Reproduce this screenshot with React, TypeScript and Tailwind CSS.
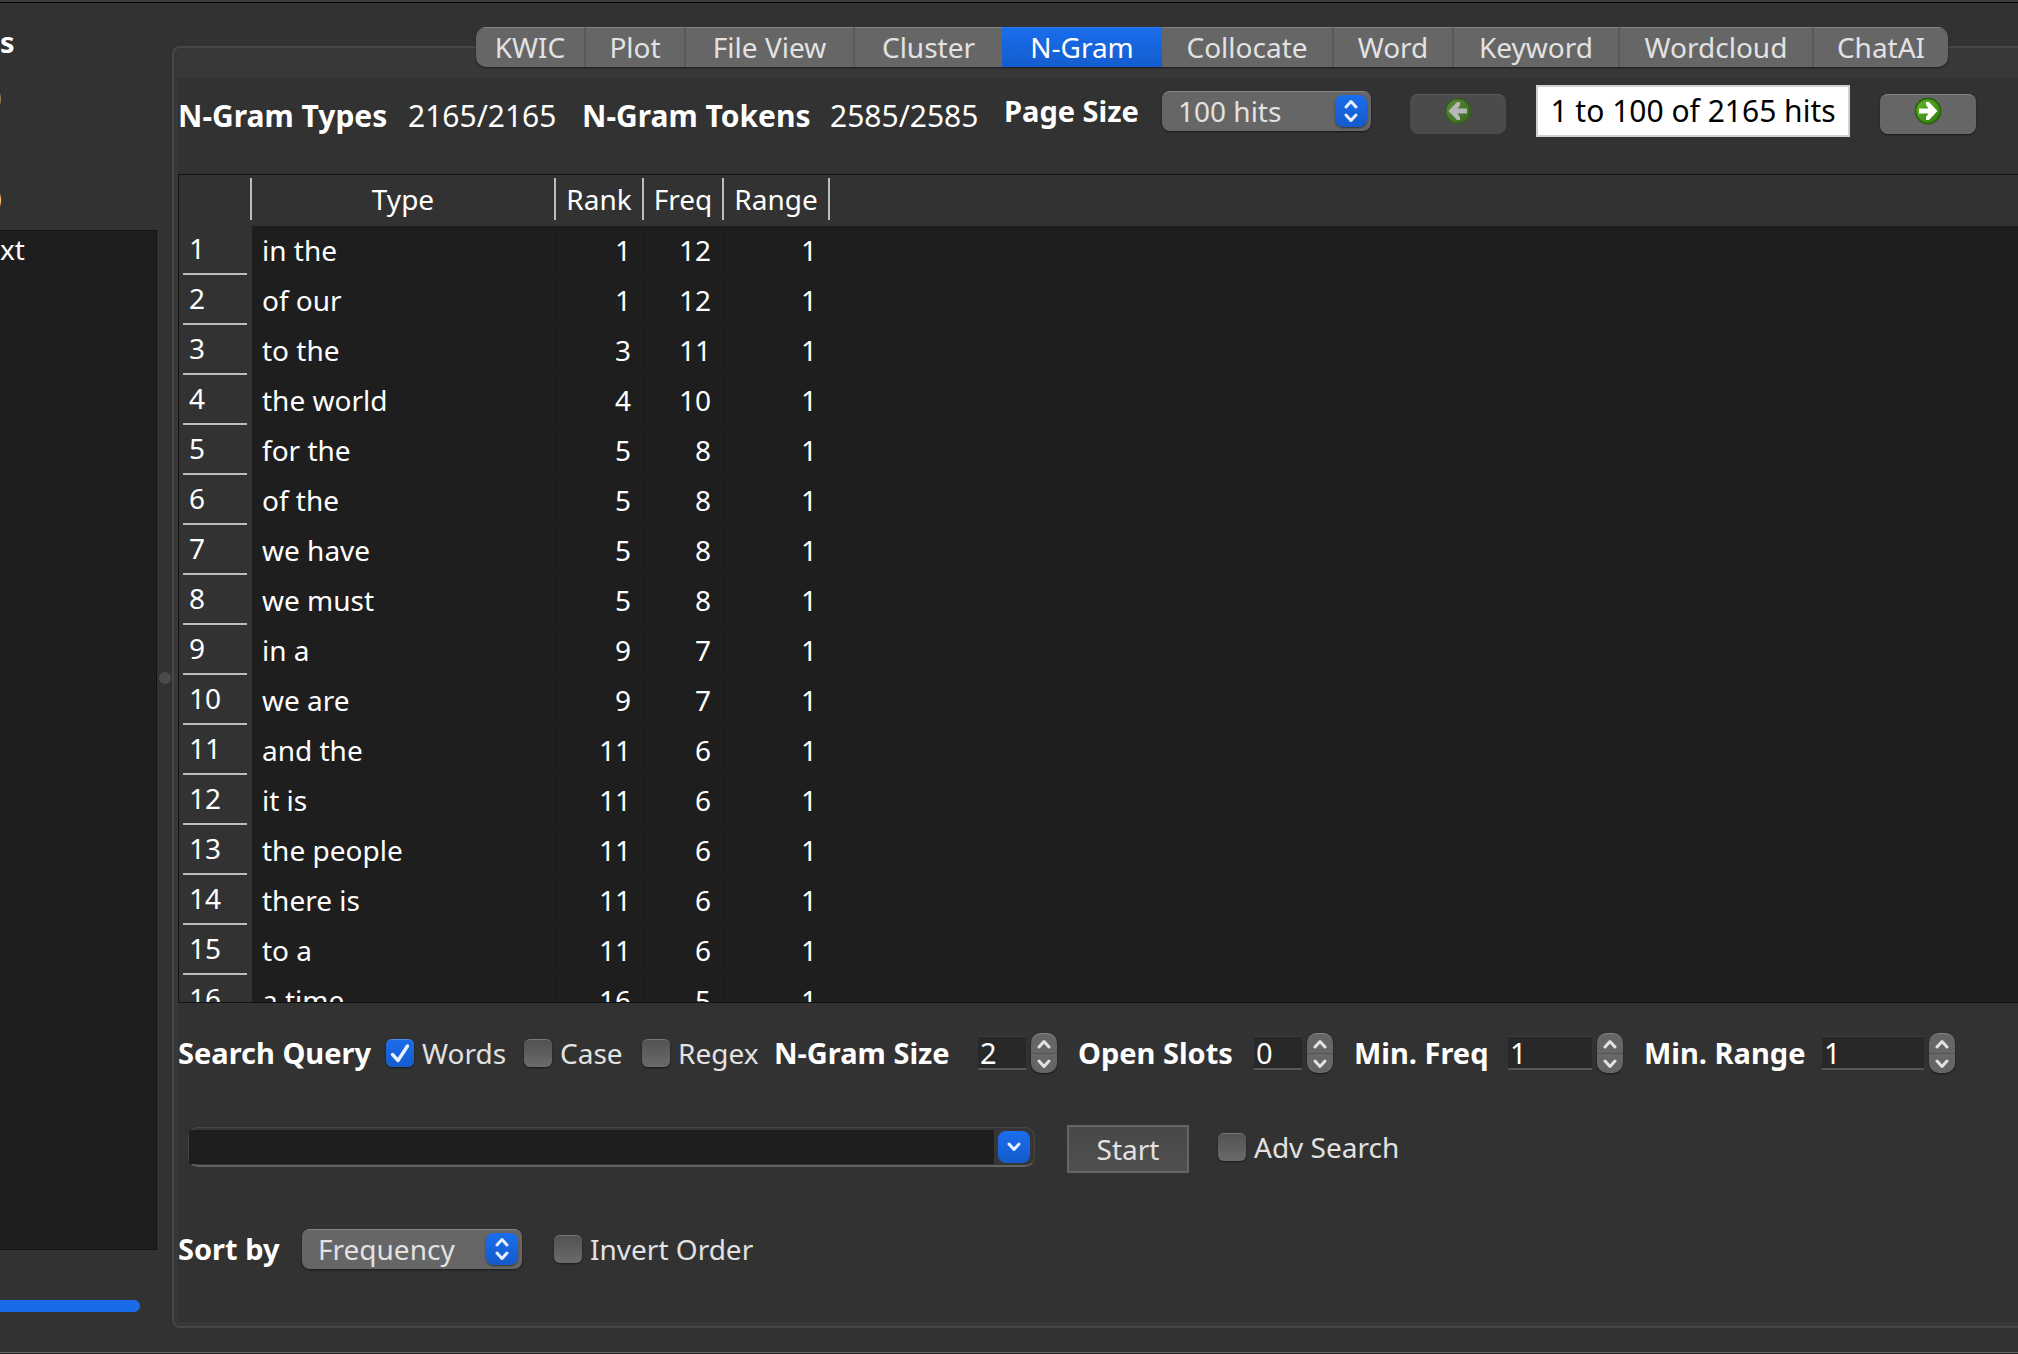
import type { ReactNode } from "react";

const TABS = [
  { name: "KWIC", width: "w-[110px]" },
  { name: "Plot", width: "w-[100px]" },
  { name: "File View", width: "w-[169px]" },
  { name: "Cluster", width: "w-[147px]" },
  { name: "N-Gram", width: "w-[160px]" },
  { name: "Collocate", width: "w-[172px]" },
  { name: "Word", width: "w-[120px]" },
  { name: "Keyword", width: "w-[166px]" },
  { name: "Wordcloud", width: "w-[194px]" },
  { name: "ChatAI", width: "w-[134px]" },
];

const ROWS: [string, number, number, number][] = [
  ["in the", 1, 12, 1],
  ["of our", 1, 12, 1],
  ["to the", 3, 11, 1],
  ["the world", 4, 10, 1],
  ["for the", 5, 8, 1],
  ["of the", 5, 8, 1],
  ["we have", 5, 8, 1],
  ["we must", 5, 8, 1],
  ["in a", 9, 7, 1],
  ["we are", 9, 7, 1],
  ["and the", 11, 6, 1],
  ["it is", 11, 6, 1],
  ["the people", 11, 6, 1],
  ["there is", 11, 6, 1],
  ["to a", 11, 6, 1],
  ["a time", 16, 5, 1],
];

function Popup({ id, value, width }: { id: string; value: string; width: string }) {
  return (
    <div className={`relative h-10 ${width}`}>
      <select
        id={id}
        defaultValue={value}
        className="h-10 w-full appearance-none rounded-lg border-t border-[#858585] bg-[#666666] pb-0.5 pl-4 text-[28px] leading-9 text-[#e2e2e2] shadow-[0_1px_2px_rgba(0,0,0,0.5)]"
      >
        <option>{value}</option>
      </select>
      <span className="pointer-events-none absolute top-1 right-1 flex h-8 w-8 items-center justify-center rounded-lg bg-linear-to-b from-[#1b6eee] to-[#145acb] shadow-[0_1px_2px_rgba(0,0,0,0.5)]">
        <svg width="14" height="24" viewBox="0 0 14 24" fill="none" stroke="#e8f0fd" strokeWidth="3" strokeLinecap="round" strokeLinejoin="round">
          <path d="M2 8 L7 2.5 L12 8" />
          <path d="M2 16 L7 21.5 L12 16" />
        </svg>
      </span>
    </div>
  );
}

function Check({ label, checked }: { label: string; checked?: boolean }) {
  return (
    <label className="flex items-center gap-2 text-[28px] leading-9 whitespace-nowrap text-[#e2e2e2]">
      <span className="relative h-7 w-7 shrink-0">
        <input
          type="checkbox"
          defaultChecked={checked}
          className="block h-7 w-7 appearance-none rounded-md border-t border-[#7a7a7a] bg-linear-to-b from-[#525252] to-[#6b6b6b] shadow-[0_1px_2px_rgba(0,0,0,0.5)] checked:border-[#4a8df2] checked:from-[#1b6cea] checked:to-[#155ccd]"
        />
        {checked && (
          <svg className="pointer-events-none absolute inset-0" width="28" height="28" viewBox="0 0 28 28" fill="none" stroke="#e8f0fd" strokeWidth="3.4" strokeLinecap="round" strokeLinejoin="round">
            <path d="M6.5 15.5 L12 21.5 L21.5 7" />
          </svg>
        )}
      </span>
      {label}
    </label>
  );
}

function Spin({ id, value, width }: { id: string; value: string; width: string }) {
  return (
    <div className="flex items-center gap-[5px]">
      <input
        id={id}
        type="text"
        defaultValue={value}
        className={`h-[34px] border-t border-b-2 border-t-[#3c3c3c] border-b-[#565656] bg-[#282828] pl-0.5 text-[29px] leading-8 text-white ${width}`}
      />
      <div className="flex h-10 w-[26px] flex-col overflow-hidden rounded-[10px] border-t border-[#858585] bg-[#666666] shadow-[0_1px_2px_rgba(0,0,0,0.5)]">
        <button type="button" aria-label={`Increase ${id}`} className="flex flex-1 items-center justify-center border-b border-[#545454]">
          <svg width="14" height="10" viewBox="0 0 14 10" fill="none" stroke="#e2e2e2" strokeWidth="3" strokeLinecap="round" strokeLinejoin="round">
            <path d="M2 8 L7 2.5 L12 8" />
          </svg>
        </button>
        <button type="button" aria-label={`Decrease ${id}`} className="flex flex-1 items-center justify-center">
          <svg width="14" height="10" viewBox="0 0 14 10" fill="none" stroke="#e2e2e2" strokeWidth="3" strokeLinecap="round" strokeLinejoin="round">
            <path d="M2 2 L7 7.5 L12 2" />
          </svg>
        </button>
      </div>
    </div>
  );
}

function PageButton({ back }: { back?: boolean }) {
  return (
    <button
      type="button"
      disabled={back}
      aria-label={back ? "Previous page" : "Next page"}
      className={
        back
          ? "flex h-10 w-24 justify-center rounded-lg border-t border-[#585858] bg-[#4b4b4b] pt-0.5"
          : "flex h-10 w-24 justify-center rounded-lg border-t border-[#858585] bg-[#666666] pt-0.5 shadow-[0_1px_2px_rgba(0,0,0,0.5)]"
      }
    >
      <svg width="28" height="28" viewBox="0 0 28 28" opacity={back ? 0.6 : 1}>
        <defs>
          <linearGradient id={back ? "orbBack" : "orbNext"} x1="0" y1="0" x2="1" y2="1">
            <stop offset="0" stopColor="#6fb52c" />
            <stop offset="0.5" stopColor="#479a17" />
            <stop offset="1" stopColor="#2f7a0c" />
          </linearGradient>
        </defs>
        <circle cx="14" cy="14" r="12.5" fill={back ? "url(#orbBack)" : "url(#orbNext)"} stroke="#2c6410" strokeWidth="2" />
        <path
          d={back ? "M4.5 14 L13 5 H16 V8 L13.5 11.5 H23 V16.5 H13.5 L16 20 V23 H13 Z" : "M23.5 14 L15 5 H12 V8 L14.5 11.5 H5 V16.5 H14.5 L12 20 V23 H15 Z"}
          fill="#fff"
        />
      </svg>
    </button>
  );
}

function HeadCell({ children }: { children?: ReactNode }) {
  return (
    <th scope="col" className="p-0 font-normal">
      <div className="mb-1 flex h-[42px] items-center justify-center border-r-2 border-[#bdbdbd]">{children}</div>
    </th>
  );
}

function Sidebar() {
  return (
    <aside className="flex w-[158px] shrink-0 flex-col text-[28px] leading-9 text-white">
      <div className="flex h-[227px] flex-col pt-[21px]">
        <h2 className="h-9 text-[29px] font-bold">s</h2>
        <div className="mt-5 flex h-9 w-0.5 justify-end overflow-hidden text-[#9a9a9a]">0</div>
        <div className="mt-[65px] flex h-9 w-0.5 justify-end overflow-hidden">0</div>
      </div>
      <div className="mr-px mb-[50px] flex-1 border border-l-0 border-[#121212] bg-[#1e1e1e]">
        <div className="h-9">xt</div>
      </div>
      <div className="mb-10 h-3 w-[140px] rounded-r-full bg-[#196be8]" />
    </aside>
  );
}

export default function App() {
  return (
    <div className="flex h-screen flex-col overflow-hidden bg-[#323232] font-['Noto_Sans',sans-serif] text-white">
      <div className="h-[3px] shrink-0 border-b border-black bg-[#3c3c3c]" />
      <div className="flex min-h-0 flex-1">
        <Sidebar />
        <div className="flex w-3.5 shrink-0 items-center justify-center">
          <div className="h-3 w-3 rounded-full bg-[#4b4b4b]" />
        </div>

        <main className="flex min-w-0 flex-1 flex-col pt-6 pb-6">
          <nav className="relative z-10 ml-[304px] flex h-10 w-max overflow-hidden rounded-[10px] bg-[#666666] shadow-[0_1px_2px_rgba(0,0,0,0.5)]">
            {TABS.map((tab, i) => (
              <button
                key={tab.name}
                type="button"
                className={`${tab.width} h-10 border-t pb-0.5 text-[28px] leading-9 whitespace-nowrap ${
                  tab.name === "N-Gram"
                    ? "border-t-[#2a78ee] bg-linear-to-b from-[#1a6dec] to-[#145dce] text-white"
                    : i < 9 && TABS[i + 1].name !== "N-Gram"
                      ? "border-t-[#858585] border-r-2 border-r-[#5a5a5a] text-[#e2e2e2]"
                      : "border-t-[#858585] text-[#e2e2e2]"
                }`}
              >
                {tab.name}
              </button>
            ))}
          </nav>

          <section className="-mt-[21px] flex min-h-0 flex-1 flex-col rounded-l-lg border-2 border-r-0 border-[#474747] bg-[#383838] pt-[30px] pb-1 pl-1">
            <div className="flex min-h-0 flex-1 flex-col bg-[#323232]">
              <div className="flex h-24 shrink-0 whitespace-nowrap">
                <dl className="grid h-[75px] shrink-0 grid-cols-[230px_174px_248px_174px] items-center text-[30px] leading-9">
                  <dt className="font-bold">N-Gram Types</dt>
                  <dd>2165/2165</dd>
                  <dt className="font-bold">N-Gram Tokens</dt>
                  <dd>2585/2585</dd>
                </dl>
                <div className="grid h-[66px] shrink-0 grid-cols-[158px_248px_126px_344px_96px] items-center">
                  <label htmlFor="page-size" className="text-[29px] leading-9 font-bold">Page Size</label>
                  <Popup id="page-size" value="100 hits" width="w-[209px]" />
                  <div className="pt-1.5"><PageButton back /></div>
                  <output className="flex h-[52px] w-[314px] items-center justify-center border-2 border-[#d0d0d0] bg-white text-[30px] leading-9 text-black">
                    1 to 100 of 2165 hits
                  </output>
                  <div className="pt-1.5"><PageButton /></div>
                </div>
              </div>

              <div className="min-h-0 flex-1 overflow-hidden border border-r-0 border-[#121212] bg-[#1e1e1e]">
                <table className="w-full table-fixed border-separate border-spacing-0 text-[28px] leading-9">
                  <colgroup>
                    <col className="w-[73px]" />
                    <col className="w-[304px]" />
                    <col className="w-[88px]" />
                    <col className="w-[80px]" />
                    <col className="w-[106px]" />
                    <col />
                  </colgroup>
                  <thead>
                    <tr className="h-[51px] bg-[#323232]">
                      <HeadCell />
                      <HeadCell>Type</HeadCell>
                      <HeadCell>Rank</HeadCell>
                      <HeadCell>Freq</HeadCell>
                      <HeadCell>Range</HeadCell>
                      <td />
                    </tr>
                  </thead>
                  <tbody>
                    {ROWS.map(([type, rank, freq, range], i) => (
                      <tr key={type} className="h-[50px]">
                        <th scope="row" className="bg-[#323232] p-0 pb-px text-left font-normal">
                          <div className="mr-[5px] ml-1 h-[49px] border-b-2 border-[#bdbdbd] pt-1 pl-1.5">{i + 1}</div>
                        </th>
                        <td className="border-r border-b border-[#1a1a1a] p-0 pb-0.5 pl-2.5">{type}</td>
                        <td className="border-r border-b border-[#1a1a1a] p-0 pr-3 pb-0.5 text-right">{rank}</td>
                        <td className="border-r border-b border-[#1a1a1a] p-0 pr-3 pb-0.5 text-right">{freq}</td>
                        <td className="border-r border-b border-[#1a1a1a] p-0 pr-3 pb-0.5 text-right">{range}</td>
                        <td />
                      </tr>
                    ))}
                  </tbody>
                </table>
              </div>

              <form className="shrink-0 pt-[30px] pb-[53px] whitespace-nowrap" onSubmit={(e) => e.preventDefault()}>
                <div className="grid h-10 grid-cols-[208px_138px_118px_132px_204px_100px_176px_100px_154px_136px_178px_134px] items-center text-[29px] leading-9">
                  <label htmlFor="query" className="font-bold">Search Query</label>
                  <Check label="Words" checked />
                  <Check label="Case" />
                  <Check label="Regex" />
                  <label htmlFor="ngram-size" className="font-bold">N-Gram Size</label>
                  <Spin id="ngram-size" value="2" width="w-12" />
                  <label htmlFor="open-slots" className="font-bold">Open Slots</label>
                  <Spin id="open-slots" value="0" width="w-12" />
                  <label htmlFor="min-freq" className="font-bold">Min. Freq</label>
                  <Spin id="min-freq" value="1" width="w-[84px]" />
                  <label htmlFor="min-range" className="font-bold">Min. Range</label>
                  <Spin id="min-range" value="1" width="w-[102px]" />
                </div>

                <div className="mt-[52px] flex h-12 items-start pl-2.5">
                  <div className="flex h-11 items-center">
                    <div className="flex h-10 w-[847px] items-center rounded-[10px] border border-b-2 border-[#474747] border-b-[#626262] bg-[#363636] pr-1">
                      <input id="query" type="text" className="h-[34px] min-w-0 flex-1 bg-[#1e1e1e] px-2 text-[28px] text-white" />
                      <button type="button" aria-label="Query history" className="ml-1 flex h-8 w-8 items-center justify-center rounded-lg bg-linear-to-b from-[#1b6eee] to-[#145acb]">
                        <svg width="14" height="10" viewBox="0 0 14 10" fill="none" stroke="#e8f0fd" strokeWidth="3" strokeLinecap="round" strokeLinejoin="round">
                          <path d="M2 2 L7 7.5 L12 2" />
                        </svg>
                      </button>
                    </div>
                  </div>
                  <button type="submit" className="ml-8 h-12 w-[122px] border-2 border-[#656565] bg-linear-to-b from-[#484848] to-[#505050] text-[28px] leading-9 text-[#e2e2e2]">
                    Start
                  </button>
                  <div className="ml-[29px] flex h-11 items-center">
                    <Check label="Adv Search" />
                  </div>
                </div>

                <div className="mt-14 flex h-10 items-center">
                  <label htmlFor="sort-by" className="w-[124px] text-[29px] leading-9 font-bold">Sort by</label>
                  <Popup id="sort-by" value="Frequency" width="w-[220px]" />
                  <div className="ml-8">
                    <Check label="Invert Order" />
                  </div>
                </div>
              </form>
            </div>
          </section>
        </main>
      </div>
      <div className="h-0.5 shrink-0 border-t border-[#6a6a6a] bg-[#222222]" />
    </div>
  );
}
